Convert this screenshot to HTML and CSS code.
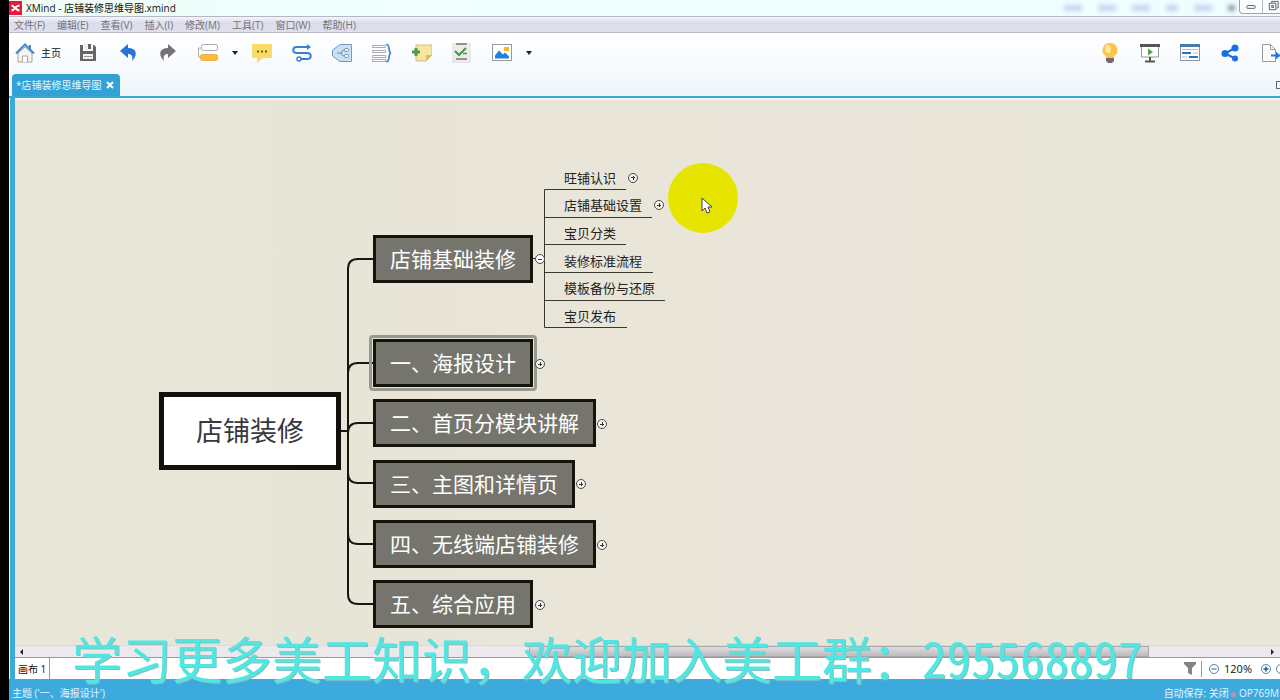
FILE: index.html
```html
<!DOCTYPE html>
<html lang="zh-CN">
<head>
<meta charset="utf-8">
<title>XMind - 店铺装修思维导图.xmind</title>
<link rel="stylesheet" href="styles.css">
</head>
<body>
<div class="app">
  <header class="titlebar">
    <svg class="logo" viewBox="0 0 13 14"><rect width="13" height="14" fill="#e8193c"/><path d="M2.500 4.500c3 0 4 5 8 5M2.500 9.500c3 0 4-5 8-5" fill="none" stroke="#fff" stroke-width="2"/></svg>
    <h1 class="title">XMind - 店铺装修思维导图.xmind</h1>
    <div class="ghosts"><i></i><i></i><i></i><i class="short"></i><i></i><i class="dark"></i></div>
    <div class="window-controls">
      <button aria-label="最小化"><svg viewBox="0 0 22 14"><rect x="6.500" y="6" width="9" height="3" rx="1" fill="#fff" stroke="#555"/></svg></button>
      <button aria-label="还原"><svg viewBox="0 0 22 14"><path d="M8.500 3V1.500h7v7H14M6 3.500h7v7H6zM8.500 6h2v2h-2z" fill="none" stroke="#555"/></svg></button>
    </div>
  </header>
  <nav class="menubar">
    <button>文件(F)</button><button>编辑(E)</button><button>查看(V)</button><button>插入(I)</button><button>修改(M)</button><button>工具(T)</button><button>窗口(W)</button><button>帮助(H)</button>
  </nav>
  <div class="toolbar">
    <button class="home"><svg viewBox="0 0 20 20"><path d="M3 10v9h14v-9L10 4z" fill="#f6f4f2" stroke="#aaa29c"/><path d="M7.500 19v-6h5v6" fill="#fff" stroke="#aaa29c"/><path d="M1 10.500L10 1.500l9 9M15 6V2" fill="none" stroke="#3f88cc" stroke-width="2"/></svg>主页</button>
    <button class="after-home" aria-label="保存"><svg viewBox="0 0 20 20"><path d="M2 2h3v6h10V2h1l2 2v14H2z" fill="#666"/><path d="M6 1h8v6H6z" fill="#f2f2f2"/><path d="M10 1h3v5h-3z" fill="#666"/><path d="M5 11h10v5H5z" fill="#f2f2f2"/><path d="M6 13.500h8" stroke="#999"/></svg></button>
    <button aria-label="撤销"><svg viewBox="0 0 20 20"><path d="M2 8l8-7v4c9 0 10 7 4 13 1-5 0-7-4-7v4z" fill="#2674d4"/></svg></button>
    <button aria-label="重做"><svg viewBox="0 0 20 20"><path d="M18 8l-8-7v4C1 5 0 12 6 18c-1-5 0-7 4-7v4z" fill="#747474"/></svg></button>
    <button aria-label="主题"><svg viewBox="0 0 20 20"><path d="M3 5H.5v9h2" fill="none" stroke="#aaa"/><rect x="3.500" y="1.500" width="16" height="6" rx="2" fill="#fff" stroke="#aaa"/><rect x="2.500" y="11.500" width="17" height="6" rx="2" fill="#f9bd45" stroke="#eeb040"/></svg></button>
    <button class="drop" aria-label="更多主题"></button>
    <button class="after-drop" aria-label="标注"><svg viewBox="0 0 20 20"><path d="M0 1h20v14h-9l-6 5v-5H0z" fill="#f8dc66"/><path d="M5 8.500h2m2 0h2m2 0h2" stroke="#7b5614" stroke-width="2"/></svg></button>
    <button aria-label="联系"><svg viewBox="0 0 20 20"><path d="M18 4H5c-5 0-5 6 0 6h10c5 0 5 6 0 6H9" fill="none" stroke="#3781d1" stroke-width="2"/><path d="M15 1l4 3-4 3" fill="#3781d1"/><circle cx="7" cy="16" r="2" fill="#fff" stroke="#3781d1" stroke-width="1.500"/></svg></button>
    <button aria-label="外框"><svg viewBox="0 0 20 20"><path d="M.5 7L8 1.500h11.500v17H8L.5 13z" fill="#cce0f2" stroke="#6f9cc5"/><path d="M5 10h4M9 10l2-3h2M9 10l2 3h2" fill="none" stroke="#6d91b5"/><rect x="12.500" y="5.500" width="4" height="3" rx="1" fill="#eef5fb" stroke="#6d91b5"/><rect x="12.500" y="11.500" width="4" height="3" rx="1" fill="#eef5fb" stroke="#6d91b5"/></svg></button>
    <button aria-label="概要"><svg viewBox="0 0 20 20"><path d="M.5 2.500h13v2H.5zM.5 7.500h13v2H.5zM.5 12.500h13v2H.5zM.5 16.500h13v2H.5z" fill="#fff" stroke="#aaa"/><path d="M14 1.500h1c3 0 1 8 4 8.500-3 .5-1 8.500-4 8.500h-1" fill="none" stroke="#4c83b8" stroke-width="1.700"/></svg></button>
    <button aria-label="备注"><svg viewBox="0 0 20 20"><path d="M4 2h16v10l-6 6H4z" fill="#f5e6a2" stroke="#d5bf78"/><path d="M20 12h-6v6z" fill="#d8bd65"/><path d="M0 9h8M4 5v8" stroke="#4b9e46" stroke-width="3"/></svg></button>
    <button aria-label="任务"><svg viewBox="0 0 20 20"><path d="M1 0h17v20H1z" fill="#ececea" stroke="#dfdfdc"/><path d="M4 1h11M11 10.500h4M4 16h11" stroke="#777" stroke-width="1.500"/><path d="M3 8l4 4 7-7" fill="none" stroke="#459a43" stroke-width="2"/></svg></button>
    <button aria-label="图片"><svg viewBox="0 0 20 20"><rect x=".5" y="1.500" width="19" height="16" fill="#fff" stroke="#999"/><path d="M3 15.500v-3l4-5 4 4 2-2 4 4v2z" fill="#2381dd"/><path d="M12 4h5v4h-5z" fill="#f9b62d"/></svg></button>
    <button class="drop" aria-label="更多插入项"></button>
    <span class="spacer"></span>
    <button aria-label="头脑风暴"><svg viewBox="0 0 20 20"><path d="M10 0a7 7 0 0 1 4 13v2H6v-2A7 7 0 0 1 10 0z" fill="#f9c54d"/><ellipse cx="8" cy="6" rx="3" ry="4" fill="#ffe6a1"/><path d="M6 15h8v3l-2 2H8l-2-2z" fill="#706b6e"/></svg></button>
    <button aria-label="演示"><svg viewBox="0 0 20 20"><path d="M1.500 3h17v11h-17z" fill="#fff" stroke="#999"/><path d="M0 2.500h20" stroke="#555" stroke-width="3"/><path d="M10 14v4M5 18.500h10" stroke="#555" stroke-width="2"/><path d="M8 5.500l5 3.500-5 3.500z" fill="#4ba247"/></svg></button>
    <button aria-label="甘特图"><svg viewBox="0 0 20 20"><rect x=".5" y="1.500" width="19" height="16" fill="#fff" stroke="#8a97a3"/><path d="M0 2.500h20" stroke="#4b7ba5" stroke-width="3"/><path d="M2 10h9M9 14h9" stroke="#2874cd" stroke-width="2"/><path d="M2 6.500h16M2 14h5M13 10h5" stroke="#bbb"/></svg></button>
    <button aria-label="分享"><svg viewBox="0 0 20 20"><path d="M15 5L5 10.500l10 5" fill="none" stroke="#1a6fe0" stroke-width="2"/><circle cx="15" cy="5" r="3.500" fill="#1a6fe0"/><circle cx="5" cy="10.500" r="3.500" fill="#1a6fe0"/><circle cx="15" cy="15.500" r="3" fill="#1a6fe0"/></svg></button>
    <button aria-label="导出"><svg viewBox="0 0 20 20"><path d="M2.500 1.500h8l5 5v12h-13z" fill="#fafafa" stroke="#999"/><path d="M10.500 1.500v5h5" fill="none" stroke="#999"/><path d="M11 12.500h9" stroke="#2674d4" stroke-width="2"/><path d="M16 8.500l4 4-4 4z" fill="#2674d4"/></svg></button>
  </div>
  <div class="tabs">
    <div class="tab"><span>*店铺装修思维导图</span><button aria-label="关闭"><svg viewBox="0 0 8 8"><path d="M1 1l6 6M7 1L1 7" stroke="#fff" stroke-width="2"/></svg></button></div>
    <span class="tab-edge"></span>
  </div>
  <main class="workspace">
    <section class="canvas">
      <svg class="links" width="700" height="545">
        <g fill="none" stroke="#17170f" stroke-width="2">
          <path d="M325 333h8M360 161h-17q-10 0-10 10v325q0 10 10 10h17"/>
          <path d="M360 265h-17q-10 0-10 10M360 325h-17q-10 0-10 10M333 375q0 10 10 10h17M333 436q0 10 10 10h17"/>
        </g>
        <path d="M518 160.500h12M611 91.500h-81.500v138H612M530 119.500h107M530 146.500h81M530 174.500h108M530 202.500h120" fill="none" stroke="#39382f"/>
      </svg>
      <div class="node root">店铺装修</div>
      <div class="node topic n0">店铺基础装修</div>
      <div class="node topic n1 selected">一、海报设计</div>
      <div class="node topic n2">二、首页分模块讲解</div>
      <div class="node topic n3">三、主图和详情页</div>
      <div class="node topic n4">四、无线端店铺装修</div>
      <div class="node topic n5">五、综合应用</div>
      <button class="fold minus f0" aria-label="折叠"></button>
      <button class="fold f1" aria-label="展开"></button>
      <button class="fold f2" aria-label="展开"></button>
      <button class="fold f3" aria-label="展开"></button>
      <button class="fold f4" aria-label="展开"></button>
      <button class="fold f5" aria-label="展开"></button>
      <ul class="subtopics">
        <li>旺铺认识<button class="fold-inline" aria-label="展开"></button></li>
        <li>店铺基础设置<button class="fold-inline" aria-label="展开"></button></li>
        <li>宝贝分类</li>
        <li>装修标准流程</li>
        <li>模板备份与还原</li>
        <li>宝贝发布</li>
      </ul>
      <div class="spot"></div>
      <svg class="cursor" viewBox="0 0 12 18"><path d="M1 1v13l3-3 2 5 3-1-2-5h4z" fill="#fff" stroke="#444"/></svg>
    </section>
    <div class="scrollbar"><span class="arrow-left"></span><span class="thumb"></span><span class="arrow-right"></span></div>
    <div class="sheets">
      <button class="sheet">画布 1</button>
      <div class="zoom">
        <svg class="filter" viewBox="0 0 12 13"><path d="M0 0h12v2L8 6v7l-4-2V6L0 2z" fill="#858585"/></svg>
        <button class="round" aria-label="缩小"><svg viewBox="0 0 10 10"><circle cx="5" cy="5" r="4.500" fill="#fff" stroke="#5c7f9e"/><path d="M2.500 5h5" stroke="#33658f"/></svg></button>
        <span class="percent">120%</span>
        <button class="round" aria-label="放大"><svg viewBox="0 0 10 10"><circle cx="5" cy="5" r="4.500" fill="#fff" stroke="#5c7f9e"/><path d="M2.500 5h5M5 2.500v5" stroke="#1f5f96" stroke-width="1.500"/></svg></button>
        <button class="round" aria-label="实际大小"><svg viewBox="0 0 10 10"><circle cx="5" cy="5" r="4.500" fill="#fff" stroke="#5c7f9e"/></svg></button>
      </div>
    </div>
  </main>
  <footer class="status"><span>主题 ('一、海报设计')</span><span class="autosave">自动保存: 关闭 <i></i> OP769M</span></footer>
</div>
<div class="banner">学习更多美工知识，欢迎加入美工群：<span>295568897</span></div>
</body>
</html>
```
FILE: styles.css
```css
* { box-sizing: border-box; }
body {
  margin: 0;
  background: #000;
  font: 10px/14px "Open Sans", "Noto Sans CJK SC", sans-serif;
  color: #222;
  overflow: hidden;
}
button { border: 0; padding: 0; background: none; font: inherit; color: inherit; display: block; }
svg { display: block; }

.app {
  min-height: 100vh;
  margin-left: 9px;
  display: flex;
  flex-direction: column;
  overflow: hidden;
  background: #f4fafd;
}

.titlebar {
  height: 16px;
  display: flex;
  align-items: center;
  background: linear-gradient(90deg, #effcf6, #f0ffff 30%, #effdff);
}
.logo { width: 13px; height: 14px; }
.title { margin: 0 auto 0 4px; font-size: 10px; font-weight: 400; white-space: nowrap; color: #111; }
.ghosts { display: flex; gap: 16px; filter: blur(2px); margin-right: 4px; }
.ghosts i { width: 18px; height: 6px; background: #c3d7f0; }
.ghosts .short { width: 12px; }
.ghosts .dark { width: 7px; background: #8d9aa1; }
.window-controls { display: flex; height: 14px; margin-right: -6px; align-self: flex-start; border: 1px solid #9aa5ae; border-top: 0; border-radius: 0 0 0 4px; background: #fafdfe; }
.window-controls button + button { border-left: 1px solid #b4bcc2; }
.window-controls svg { width: 22px; height: 13px; }

.menubar {
  height: 17px;
  display: flex;
  align-items: center;
  gap: 12px;
  padding-left: 5px;
  border-top: 1px solid #b5b7c2;
  border-bottom: 1px solid #b9bbc6;
  background: linear-gradient(#f5f5fa, #dcdcea 40%, #e0e0ed);
  color: #72727a;
  white-space: nowrap;
}

.toolbar {
  height: 40px;
  display: flex;
  align-items: center;
  gap: 20px;
  padding-left: 6px;
  background: linear-gradient(#ffffff, #f5f9fd);
}
.toolbar svg { width: 20px; height: 20px; }
.home { display: flex; align-items: center; gap: 6px; color: #111; }
.after-home { margin-left: -3px; }
.drop { border: 3px solid transparent; border-top: 4px solid #222; border-bottom: 0; margin-left: -6px; }
.after-drop { margin-left: -6px; }
.spacer { flex: 1; }

.tabs {
  height: 25px;
  display: flex;
  justify-content: space-between;
  align-items: flex-end;
  padding-left: 3px;
  border-bottom: 2px solid #3aa9da;
  background: linear-gradient(#f5f9fd, #ecf5fb);
}
.tab {
  height: 22px;
  padding: 0 6px 0 4px;
  display: flex;
  align-items: center;
  gap: 4px;
  border-radius: 4px 4px 0 0;
  background: #32a2d6;
  color: #e4f5fd;
  white-space: nowrap;
}
.tab svg { width: 8px; height: 8px; }
.tab-edge { width: 4px; height: 8px; align-self: center; border: 1px solid #666; border-right: 0; }

.workspace { flex: 1; display: flex; flex-direction: column; margin-left: 1px; border-left: 5px solid #3daade; }
.canvas {
  position: relative;
  flex: 1;
  overflow: hidden;
  background: linear-gradient(90deg, #e6e6d9, #e8e5d8 30%, #eae5da 60%, #e8e5d9);
  box-shadow: inset 0 2px 0 #f6f6f2;
}
.links { position: absolute; left: 0; top: 0; }

.node { position: absolute; display: flex; align-items: center; justify-content: center; white-space: nowrap; }
.root { left: 144px; top: 294px; width: 182px; height: 78px; border: 5px solid #11110b; background: #fff; color: #383840; font-size: 27px; line-height: 36px; }
.topic { left: 358px; height: 48px; padding: 0 14px; border: 3px solid #14140d; background: #75756d; color: #fff; font-size: 21px; line-height: 28px; }
.selected::after { content: ""; position: absolute; inset: -7px; border: 3px solid #969b8f; border-radius: 4px; }
.n0 { top: 137px; }
.n1 { top: 241px; }
.n2 { top: 301px; }
.n3 { top: 362px; }
.n4 { top: 422px; }
.n5 { top: 482px; }

.fold, .fold-inline {
  width: 10px;
  height: 10px;
  border: 1px solid #4a484a;
  border-radius: 50%;
  background:
    linear-gradient(#333, #333) center / 4px 1px no-repeat,
    linear-gradient(#333, #333) center / 1px 4px no-repeat,
    #f7f4ef;
}
.fold { position: absolute; }
.minus { background: linear-gradient(#333, #333) center / 4px 1px no-repeat, #fff; }
.f0 { left: 520px; top: 156px; }
.f1 { left: 520px; top: 261px; }
.f2 { left: 582px; top: 321px; }
.f3 { left: 561px; top: 381px; }
.f4 { left: 582px; top: 442px; }
.f5 { left: 520px; top: 502px; }

.subtopics { position: absolute; left: 549px; top: 66px; height: 166px; margin: 0; padding: 0; list-style: none; display: grid; grid-template-rows: repeat(6, 1fr); font-size: 13px; line-height: 26px; white-space: nowrap; }
.subtopics li { display: flex; align-items: center; gap: 12px; }

.spot { position: absolute; left: 653px; top: 65px; width: 70px; height: 70px; border-radius: 50%; background: #e7e500; }
.cursor { position: absolute; left: 686px; top: 99px; width: 12px; height: 18px; }

.scrollbar { height: 13px; display: flex; align-items: center; background: #ece9ec; border-top: 1px solid #dcd9d9; border-bottom: 1px solid #999; }
.arrow-left, .arrow-right { border: 3px solid transparent; }
.arrow-left { border-right-color: #222; border-left: 0; margin-left: 5px; }
.arrow-right { border-left-color: #222; border-right: 0; margin: 0 6px 0 auto; }
.thumb { width: 49%; height: 11px; margin-left: 40%; border: 1px solid #aaa7aa; background: linear-gradient(#dedcde, #bebbbf); }

.sheets { height: 21px; display: flex; justify-content: space-between; background: #fff; }
.sheet { padding: 0 3px; border-right: 1px solid #999; color: #111; }
.zoom { display: flex; align-items: center; gap: 5px; margin-right: -6px; }
.filter { width: 12px; height: 13px; }
.round svg { width: 10px; height: 10px; }
.filter + .round { border-left: 1px solid #999; padding: 3px 0 3px 7px; }
.percent { font-size: 11px; margin-right: 4px; color: #111; }

.status { height: 21px; padding: 7px 1px 0 3px; display: flex; justify-content: space-between; background: #3daade; color: #e3f4fc; white-space: nowrap; }
.autosave i { display: inline-block; width: 5px; height: 5px; border-radius: 50%; background: #c98fa8; }

.banner {
  position: absolute;
  left: 72px;
  top: 625px;
  display: flex;
  align-items: center;
  font: 400 50px/64px "Noto Sans CJK SC", sans-serif;
  color: #50e6e2;
  text-shadow: 1px 1px 0 #8abfc0;
  white-space: nowrap;
}
.banner span { font-size: 49px; font-feature-settings: "hwid"; }
```
